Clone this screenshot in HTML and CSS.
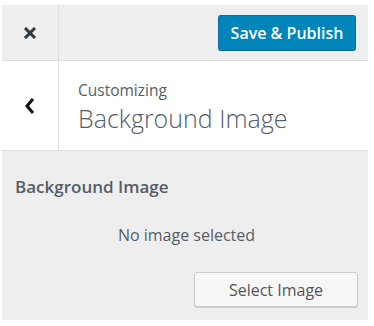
FILE: index.html
```html
<!DOCTYPE html>
<html lang="en">
<head>
  <meta charset="UTF-8">
  <title>Customizing: Background Image</title>
  <link rel="stylesheet" href="styles.css">
</head>
<body>

  <div class="panel">
    <div class="header">
      <button class="close" aria-label="Close">
        <svg width="14" height="12" viewBox="0 0 14 12"><path d="M2 1 L12 11 M12 1 L2 11" stroke="#32373c" stroke-width="3" fill="none"/></svg>
      </button>
      <button class="publish">Save &amp; Publish</button>
    </div>

    <div class="title-bar">
      <button class="back" aria-label="Back">
        <svg width="12" height="18" viewBox="0 0 12 18"><path d="M9 2 L3 9 L9 16" stroke="#111" stroke-width="3" fill="none"/></svg>
      </button>
      <div class="title-text">
        <span class="crumb">Customizing</span>
        <h3>Background Image</h3>
      </div>
    </div>

    <div class="section">
      <span class="control-title">Background Image</span>
      <p class="placeholder">No image selected</p>
      <div class="actions">
        <button class="select">Select Image</button>
      </div>
    </div>
  </div>

</body>
</html>
```

FILE: styles.css
```css
body {
  font-family: 'Open Sans', sans-serif;
  background-color: white;
  margin: 5px 6px 0 2px;
  padding: 0;
}

.panel {
  width: 366px;
  background-color: #eeeeee;
  color: #555d66;
}

button {
  font-family: 'Open Sans', sans-serif;
  cursor: pointer;
}

.header {
  display: flex;
  align-items: center;
  height: 55px;
  border-bottom: 1px solid #dddddd;
}

.close, .back {
  width: 57px;
  height: 100%;
  background: none;
  border: none;
  border-right: 1px solid #dddddd;
  display: flex;
  align-items: center;
  justify-content: center;
  padding: 0;
}

.publish {
  margin-left: auto;
  margin-right: 12px;
  width: 138px;
  height: 36px;
  background-color: #0085ba;
  border: 1px solid #0073aa;
  border-bottom-color: #006799;
  border-radius: 3px;
  color: white;
  font-size: 16px;
  font-weight: 600;
  padding: 0;
}

.title-bar {
  display: flex;
  height: 89px;
  background-color: white;
  border-bottom: 1px solid #dddddd;
}

.title-text {
  padding: 18px 0 0 19px;
}

.crumb {
  display: block;
  font-size: 15.5px;
  line-height: 22px;
}

h3 {
  margin: 0;
  font-size: 25px;
  font-weight: 300;
  line-height: 34px;
}

.section {
  height: 169px;
  padding: 0 10px 0 13px;
}

.control-title {
  display: block;
  padding-top: 24px;
  font-size: 17px;
  font-weight: 600;
  line-height: 24px;
}

.placeholder {
  margin: 24px 0 0;
  text-align: center;
  font-size: 16px;
  line-height: 24px;
}

.actions {
  display: flex;
  justify-content: flex-end;
  margin-top: 25px;
}

.select {
  width: 164px;
  height: 35px;
  background-color: #f7f7f7;
  border: 1px solid #cccccc;
  border-radius: 3px;
  box-shadow: 0 1px 0 #cccccc;
  color: #555555;
  font-size: 16px;
  padding: 0;
}
```
